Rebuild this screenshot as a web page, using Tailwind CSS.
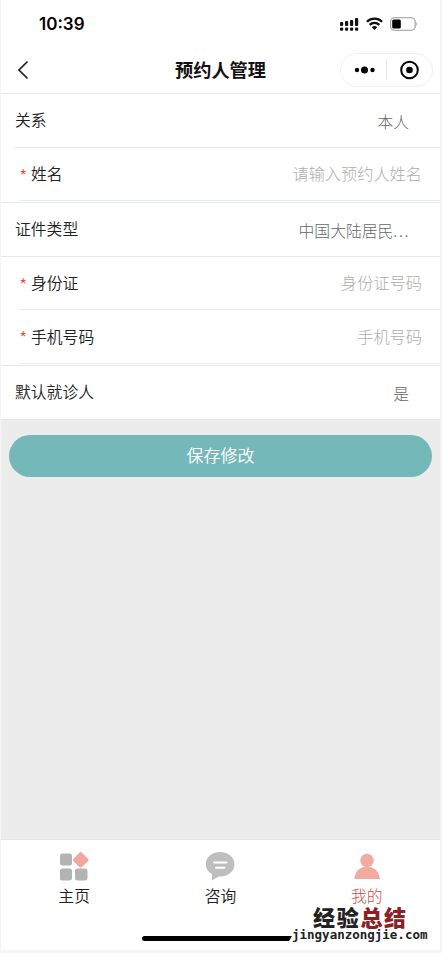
<!DOCTYPE html>
<html lang="zh-CN">
<head>
<meta charset="utf-8">
<title>预约人管理</title>
<script src="https://cdn.jsdelivr.net/npm/@tailwindcss/browser@4"></script>
</head>
<body class="bg-[#f5f5f5] w-[442px] h-[953px] overflow-hidden font-['Noto_Sans_CJK_SC',sans-serif]">
<div class="relative ml-px w-[439px] h-[950px] bg-white flex flex-col text-[15.8px] leading-[24px] text-[#222] font-[350]">
  <div class="h-[47px] shrink-0 flex items-center justify-between pl-[38px] pr-[22px]">
    <span class="pt-px font-['Inter',sans-serif] font-semibold text-[17px] text-black leading-none">10:39</span>
    <div class="flex items-center gap-[7px]">
      <svg width="19" height="14" viewBox="0 0 19 14" fill="#111"><rect x="0" y="5" width="3.2" height="4" rx="1"/><rect x="5" y="4" width="3.2" height="5" rx="1"/><rect x="10" y="3" width="3.2" height="6" rx="1"/><rect x="15" y="1" width="3.2" height="8" rx="1"/><rect x="0" y="10.5" width="3.2" height="3.2" rx="1"/><rect x="5" y="10.5" width="3.2" height="3.2" rx="1"/><rect x="10" y="10.5" width="3.2" height="3.2" rx="1"/><rect x="15" y="10.5" width="3.2" height="3.2" rx="1"/></svg>
      <svg width="17" height="13" viewBox="0 0 17 13" fill="none" stroke="#111" stroke-width="2.3"><path d="M.9 4.7C5.200.500 11.800.500 16.100 4.700"/><path d="M3.700 7.900C6.400 5.300 10.600 5.300 13.300 7.900"/><path d="M5.800 10.200C7.300 8.700 9.700 8.700 11.200 10.200L8.500 12.900Z" fill="#111" stroke="none"/></svg>
      <svg width="28" height="14" viewBox="0 0 28 14"><rect x=".6" y=".8" width="24.600" height="12.400" rx="3.800" fill="none" stroke="#999" stroke-width="1.100"/><rect x="2.200" y="2.600" width="8.600" height="8.800" rx="1.500" fill="#000"/><path d="M26.500 4.800Q28 7 26.500 9.200Z" fill="#888"/></svg>
    </div>
  </div>
  <div class="h-[47px] shrink-0 border-b border-[#e9e9ec] grid grid-cols-[1fr_auto_1fr] items-center">
    <svg class="ml-[16px]" width="12" height="20" viewBox="0 0 12 20" fill="none" stroke="#222" stroke-width="1.700"><path d="M10.500 1.500L2 10L10.500 18.500"/></svg>
    <h1 class="font-bold text-[18.200px] text-[#111] pb-[2px]">预约人管理</h1>
    <div class="justify-self-end mr-[7px] w-[93px] h-[34px] border border-[#f0f0f0] rounded-full flex items-center">
      <svg class="w-[91px] h-[32px]" viewBox="0 0 91 32"><g fill="#000"><circle cx="16" cy="16" r="2.200"/><circle cx="23.500" cy="16" r="3.500"/><circle cx="31.500" cy="16" r="2.200"/><circle cx="68.500" cy="16" r="3.300"/></g><circle cx="68.500" cy="16" r="8.300" fill="none" stroke="#000" stroke-width="2"/><path d="M45.500 6V26" stroke="#e5e5e5"/></svg>
    </div>
  </div>

  <div class="h-[54px] shrink-0 pl-[14px]"><div class="h-full border-b border-[#e1e7ef] flex justify-between items-center pr-[31px]"><span class="pb-[2px]">关系</span><span class="pt-[3px] font-light text-[#666]">本人</span></div></div>
  <div class="h-[53px] shrink-0 pl-[18px]"><div class="h-full border-b border-[#e4ebf1] flex items-center pr-[18px]"><span class="w-[12px] text-[#e64545] text-[19px] pt-[3px] font-light">*</span><span>姓名</span><span class="ml-auto pb-[2px] font-light text-[16.200px] text-[#aeaeae]">请输入预约人姓名</span></div></div>
  <div class="h-[56px] shrink-0 pt-px"><div class="h-full border-y border-[#e4e9f3] flex justify-between items-center pl-[14px] pr-[30px]"><span class="pb-[2px]">证件类型</span><span class="pt-[3px] font-light text-[#666]">中国大陆居民<span class="tracking-[1.600px]">...</span></span></div></div>
  <div class="h-[53px] shrink-0 pl-[18px]"><div class="h-full border-b border-[#e4e9ef] flex items-center pr-[18px]"><span class="w-[12px] text-[#e64545] text-[19px] pt-[3px] font-light">*</span><span>身份证</span><span class="ml-auto pb-[2px] font-light text-[16.200px] text-[#aeaeae]">身份证号码</span></div></div>
  <div class="h-[54px] shrink-0 pl-[18px]"><div class="h-full border-b border-[#e4ebf1] flex items-center pr-[18px]"><span class="w-[12px] text-[#e64545] text-[19px] pt-[3px] font-light">*</span><span>手机号码</span><span class="ml-auto pb-[2px] font-light text-[16.200px] text-[#aeaeae]">手机号码</span></div></div>
  <div class="h-[56px] shrink-0 pt-px"><div class="h-full border-y border-[#e0e8f0] flex justify-between items-center pl-[14px] pr-[31px]"><span class="pb-[2px]">默认就诊人</span><span class="pt-[3px] font-light text-[#666]">是</span></div></div>

  <div class="grow bg-[#ececec] px-[8px] pt-[15px]">
    <button class="w-[423px] h-[42px] rounded-full bg-[#75b8b9] text-white text-[17px] font-[350] block pb-[2px]">保存修改</button>
  </div>

  <div class="h-[111px] shrink-0 border-t border-[#e4e4ed] grid grid-cols-3">
    <div class="flex flex-col items-center pt-[10px]">
      <svg width="30" height="31" viewBox="0 0 30 31" fill="#b3b3b3"><rect x="1" y="3.500" width="12" height="12" rx="2.500"/><rect x="1" y="18.500" width="12" height="12" rx="2.500"/><rect x="16" y="18.500" width="12.500" height="12" rx="2.500"/><rect x="15.700" y="3.900" width="12" height="12" rx="1.800" transform="rotate(45 21.700 9.900)" fill="#f2a69d"/></svg>
      <span class="mt-[5px] leading-[20px]">主页</span>
    </div>
    <div class="flex flex-col items-center pt-[10px]">
      <svg width="30" height="31" viewBox="0 0 30 31"><path d="M15 2C7 2 .800 7.200 .800 14C.800 18.500 3.300 22 7 24V30.500L13.500 26.500C22.500 27 29.500 21.500 29.500 14.200C29.500 7 23 2 15 2Z" fill="#bebebe"/><path d="M9 12.500H21.500M11 17.700H19.500" stroke="#fff" stroke-width="2" stroke-linecap="round"/></svg>
      <span class="mt-[5px] leading-[20px]">咨询</span>
    </div>
    <div class="flex flex-col items-center pt-[10px] text-[#cf4f47]">
      <svg width="28" height="31" viewBox="0 0 28 31" fill="#f2aaa1"><circle cx="14" cy="10.500" r="6.700"/><path d="M1.200 29C1.700 22 6.500 17 12 17H16C21.500 17 26.500 22 26.800 29Z"/></svg>
      <span class="mt-[5px] leading-[20px] font-light">我的</span>
    </div>
  </div>

  <div class="absolute left-[141px] top-[936px] w-[150px] h-[5px] rounded-l-full bg-black [clip-path:polygon(0_0,100%_0,98%_100%,0_100%)]"></div>
  <div class="absolute left-[290px] top-[905px] w-[142px] text-[#222] whitespace-nowrap">
    <div class="pl-[22px] text-[22px] tracking-[1.700px] font-black leading-[22px]">经验<span class="text-[#8c2025]">总结</span></div>
    <div class="pl-px font-['DejaVu_Sans_Mono',monospace] text-[12.500px] font-bold leading-[15px]">jingyanzongjie.com</div>
  </div>
</div>
</body>
</html>
